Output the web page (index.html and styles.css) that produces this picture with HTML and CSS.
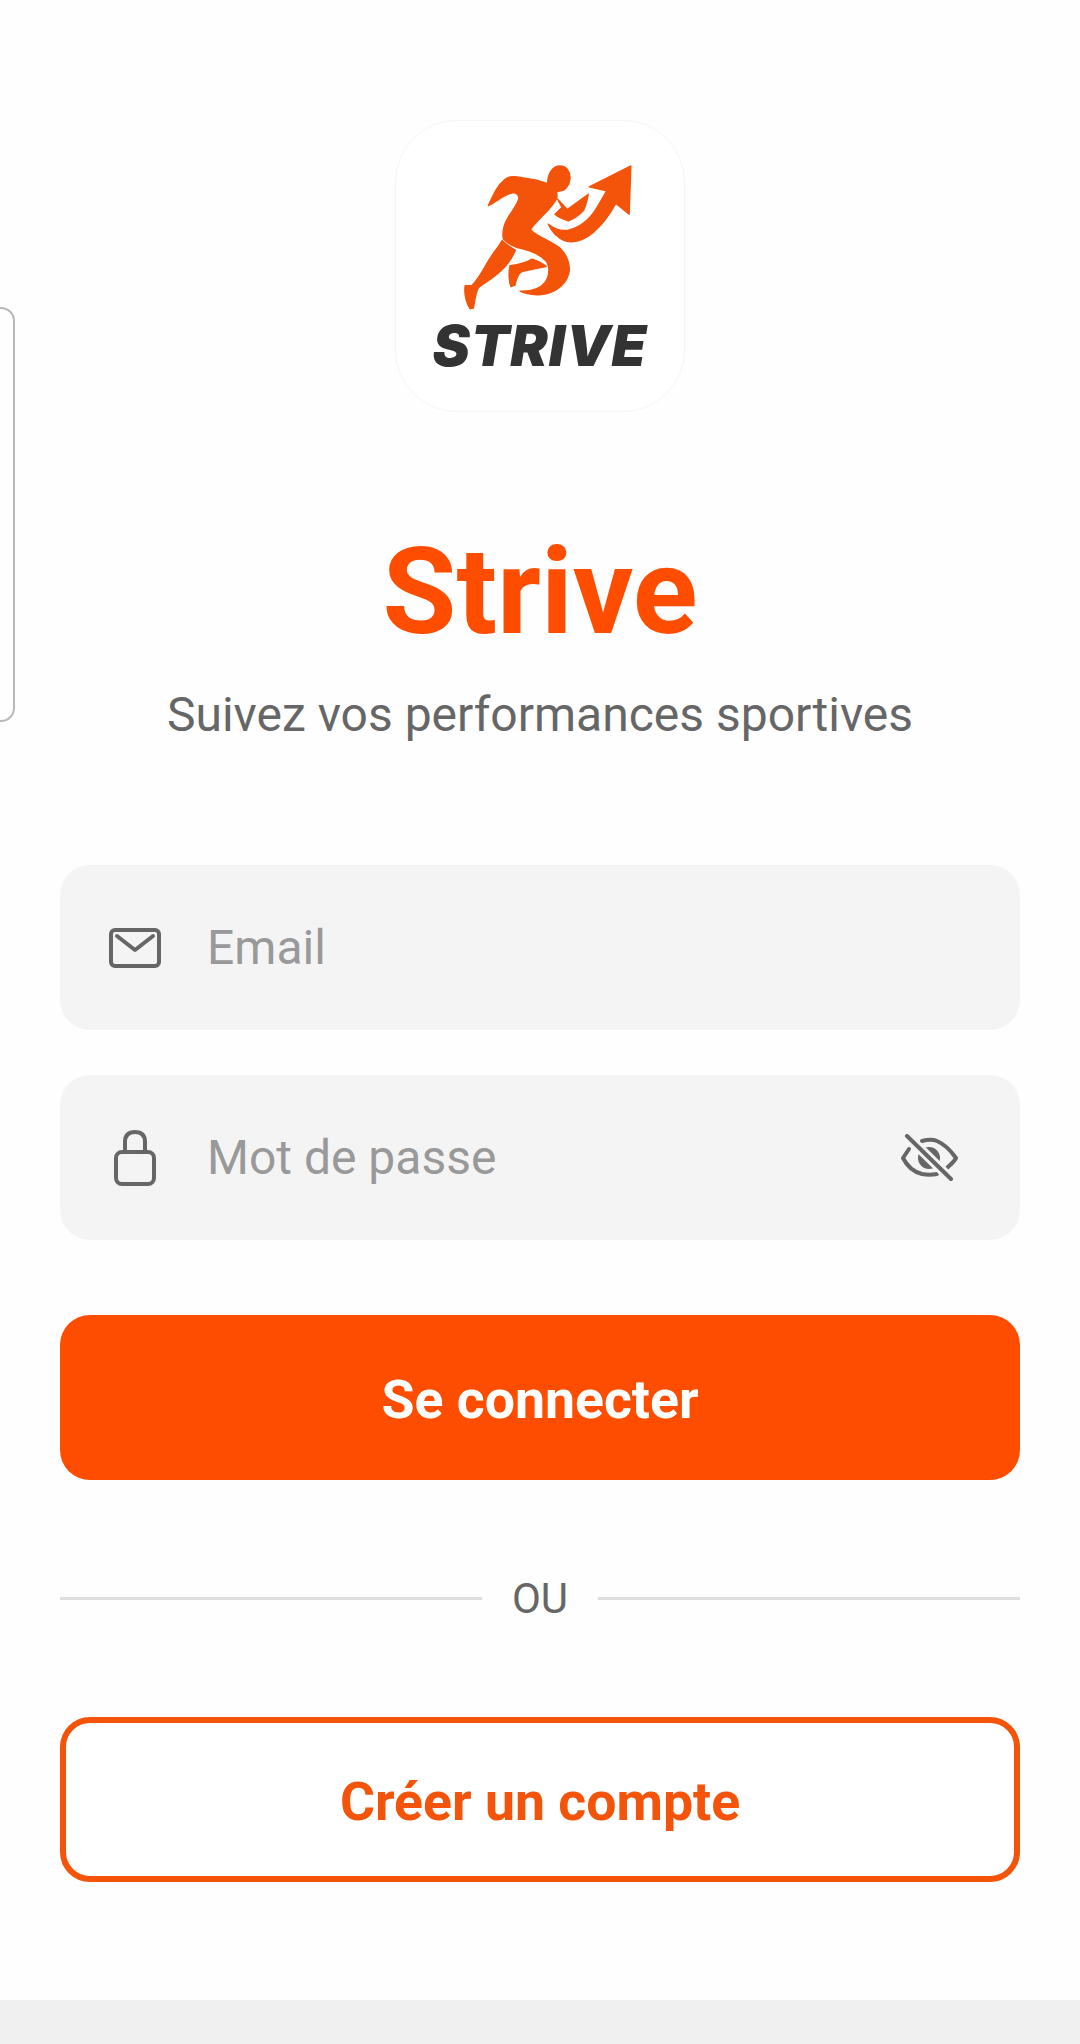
FILE: index.html
```html
<!DOCTYPE html>
<html lang="fr">
<head>
  <meta charset="UTF-8">
  <meta name="viewport" content="width=device-width, initial-scale=1.0">
  <title>Strive</title>
  <link rel="stylesheet" href="styles.css">
</head>

<body>
  <div class="side-handle"></div>

  <main class="login">
    <div class="logo-box">
      <svg class="logo-mark" viewBox="45 30 870 640" aria-hidden="true">
        <!-- torso, head and rear arm -->
        <path d="M325 284 C338 255 350 225 375 205 C385 197 398 196 412 198 L470 208 L503 218 C503 185 520 165 540 165 C560 165 572 183 570 205 C568 225 555 240 540 240 L530 243 C531 252 532 258 530 264 C517 285 503 300 488 315 C473 330 457 345 452 356 C462 372 510 390 540 412 C565 435 572 470 566 490 C555 530 510 555 470 552 C450 551 435 548 420 541 C450 542 480 535 495 515 C510 495 510 465 497 449 C480 430 445 418 410 410 C395 405 380 395 370 385 C366 365 372 340 384 320 C396 300 413 280 417 262 C415 250 408 245 398 246 C375 250 345 275 325 284 Z"/>
        <!-- rear leg -->
        <path d="M366 389 C380 402 392 410 406 418 C395 445 380 465 360 482 C335 505 310 518 296 530 C288 540 285 560 280 592 L270 594 C258 575 252 550 255 525 L275 525 C295 505 310 475 325 450 C340 425 355 410 366 389 Z"/>
        <!-- front shin and foot -->
        <path d="M390 465 C415 462 440 455 456 445 C472 450 488 458 499 467 C475 473 445 476 425 483 C412 490 408 510 405 523 L393 528 C387 515 385 485 390 465 Z"/>
        <!-- forearm -->
        <path d="M533 265 L562 296 L625 250 C622 268 618 285 610 300 C595 315 580 325 565 330 C550 325 535 318 525 310 L546 290 Z"/>
        <!-- arrow swoosh -->
        <path d="M505 340 C525 355 545 362 565 358 C600 350 630 325 650 292 C662 272 672 255 680 240 L628 228 L753 165 L748 310 L708 278 C690 310 670 340 640 365 C610 390 580 397 555 390 C535 382 515 362 505 340 Z"/>
      </svg>
      <span class="logo-word">STRIVE</span>
    </div>

    <h1 class="app-name">Strive</h1>
    <p class="tagline">Suivez vos performances sportives</p>

    <form class="login-form">
      <label class="field">
        <svg class="field-icon" viewBox="0 0 56 56" aria-hidden="true">
          <rect x="3" y="10" width="48" height="36" rx="4"/>
          <path d="M9 16 L27 30 L45 16"/>
        </svg>
        <span class="placeholder">Email</span>
      </label>

      <label class="field field-password">
        <svg class="field-icon" viewBox="0 0 56 56" aria-hidden="true">
          <rect x="8" y="22" width="38" height="32" rx="6"/>
          <path d="M17 22 V12 C17 5 21 2 27 2 C33 2 37 5 37 12 V22"/>
        </svg>
        <span class="placeholder">Mot de passe</span>
        <svg class="eye-icon" viewBox="0 0 60 48" aria-hidden="true">
          <circle class="eye-pupil" cx="29" cy="24" r="11"/>
          <path d="M22 7 C26 6 32 5 37 7 C44 10 51 17 56 24 C54 28 50 31 47 34"/>
          <path d="M9 15 C7 18 5 21 3 24 C7 32 14 38 22 40 C27 41 32 41 37 40"/>
          <path class="eye-gap" d="M7 2 L51 45"/>
          <path d="M7 2 L51 45"/>
        </svg>
      </label>

      <button type="button" class="btn btn-primary">Se connecter</button>

      <div class="divider"><span>OU</span></div>

      <button type="button" class="btn btn-outline">Créer un compte</button>
    </form>
  </main>

  <div class="bottom-bar"></div>
</body>
</html>
```

FILE: styles.css
```css
* {
  margin: 0;
  padding: 0;
  box-sizing: border-box;
}

body {
  font-family: Roboto, sans-serif;
  background: #fefefe;
  height: 2044px;
  overflow: hidden;
  position: relative;
  display: flex;
  flex-direction: column;
}

.side-handle {
  position: absolute;
  left: -20px;
  top: 307px;
  width: 35px;
  height: 415px;
  border: 2px solid #b8b8b8;
  border-radius: 14px;
}

.login {
  flex: 1;
  padding: 120px 60px 0;
  display: flex;
  flex-direction: column;
  align-items: center;
}

.logo-box {
  width: 290px;
  height: 292px;
  background: #fff;
  border: 1px solid #f5f5f5;
  border-radius: 62px;
  display: flex;
  flex-direction: column;
  align-items: center;
}

.logo-mark {
  width: 290px;
  height: 213px;
  fill: #f4530a;
  stroke: #f4530a;
  stroke-width: 4;
  stroke-linejoin: round;
  flex-shrink: 0;
}

.logo-word {
  font-family: Inter, sans-serif;
  font-size: 56px;
  line-height: 40px;
  font-weight: 900;
  font-style: italic;
  letter-spacing: 1px;
  color: #333;
  margin-top: -8px;
}

.app-name {
  font-size: 120px;
  line-height: 140px;
  font-weight: 700;
  color: #ff4d00;
  margin-top: 110px;
}

.tagline {
  font-size: 48px;
  line-height: 56px;
  color: #666;
  margin-top: 25px;
}

.login-form {
  width: 100%;
  margin-top: 122px;
  display: flex;
  flex-direction: column;
}

.field {
  height: 165px;
  background: #f4f4f4;
  border-radius: 30px;
  padding: 0 60px 0 48px;
  display: flex;
  align-items: center;
  margin-bottom: 45px;
}

.field-icon {
  width: 56px;
  height: 56px;
  fill: none;
  stroke: #666;
  stroke-width: 4;
  stroke-linecap: round;
  stroke-linejoin: round;
  flex-shrink: 0;
}

.placeholder {
  font-size: 48px;
  color: #999;
  margin-left: 43px;
  flex: 1;
}

.eye-icon {
  width: 60px;
  height: 48px;
  fill: none;
  stroke: #666;
  stroke-width: 4;
  stroke-linecap: round;
  stroke-linejoin: round;
  flex-shrink: 0;
}

.eye-icon .eye-pupil {
  fill: #666;
  stroke: none;
}

.eye-icon .eye-gap {
  stroke: #f4f4f4;
  stroke-width: 10;
}

.btn {
  height: 165px;
  width: 100%;
  border-radius: 30px;
  font-family: Roboto, sans-serif;
  font-size: 53.6px;
  font-weight: 700;
  padding-top: 4px;
  cursor: pointer;
}

.btn-primary {
  background: #ff4d00;
  border: none;
  color: #fff;
  margin-top: 30px;
}

.btn-outline {
  background: #fff;
  border: 6px solid #f4530a;
  color: #f4530a;
}

.divider {
  display: flex;
  align-items: center;
  gap: 30px;
  height: 56px;
  margin: 90px 0 91px;
  font-size: 42px;
  color: #666;
}

.divider::before,
.divider::after {
  content: "";
  flex: 1;
  height: 3px;
  background: #ddd;
}

.bottom-bar {
  height: 44px;
  background: #f0f0f0;
}
```
